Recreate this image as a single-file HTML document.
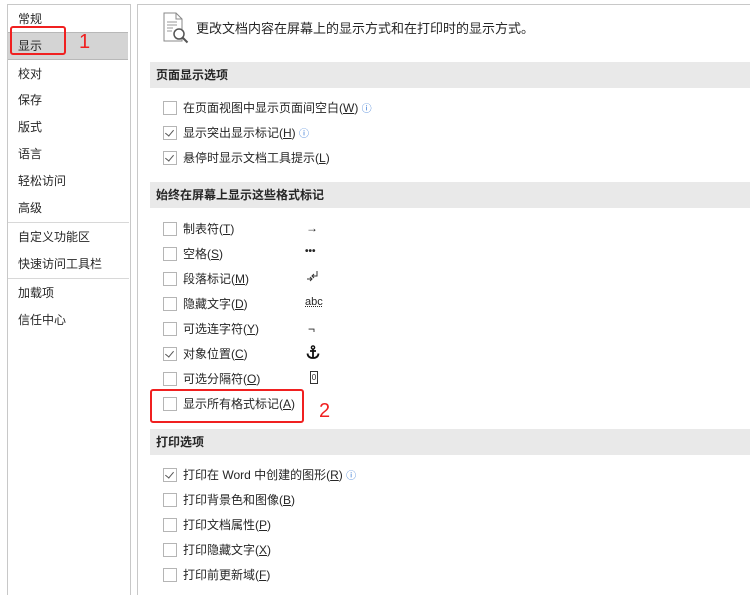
<html><head><style>
body{margin:0;width:750px;height:583px;background:#fff;font-family:"Liberation Sans","Noto Sans CJK SC",sans-serif;font-size:12px;color:#262626;position:relative;overflow:hidden}
.a{position:absolute;white-space:nowrap}
.lp{position:absolute;left:7px;top:4px;width:122px;height:590px;border:1px solid #c8c8c8;border-bottom:none}
.rp{position:absolute;left:137px;top:4px;width:620px;height:590px;border-left:1px solid #c8c8c8;border-top:1px solid #c8c8c8}
.hd{position:absolute;left:150px;width:600px;height:26px;background:#e9e9e9;font-weight:bold;line-height:26px;padding-left:6px;box-sizing:border-box}
.cb{position:absolute;left:163px;width:12px;height:12px;border:1px solid #b5b5b5;background:#fff}
.cb.c:after{content:"";position:absolute;left:3px;top:1px;width:4px;height:7px;border-right:1px solid #555;border-bottom:1px solid #555;transform:rotate(40deg)}
u{text-decoration:underline}
.sep{position:absolute;left:8px;width:121px;height:1px;background:#d8d8d8}
</style></head><body>
<div class="lp"></div>
<div class="a" style="left:8px;top:32px;width:120px;height:26px;background:#d4d4d4;border-top:1px solid #b8b8b8;border-bottom:1px solid #b8b8b8"></div>
<div class="a" style="left:18px;top:10px">常规</div>
<div class="a" style="left:18px;top:37px">显示</div>
<div class="a" style="left:18px;top:65px">校对</div>
<div class="a" style="left:18px;top:91px">保存</div>
<div class="a" style="left:18px;top:118px">版式</div>
<div class="a" style="left:18px;top:145px">语言</div>
<div class="a" style="left:18px;top:172px">轻松访问</div>
<div class="a" style="left:18px;top:199px">高级</div>
<div class="sep" style="top:222px"></div>
<div class="a" style="left:18px;top:228px">自定义功能区</div>
<div class="a" style="left:18px;top:255px">快速访问工具栏</div>
<div class="sep" style="top:278px"></div>
<div class="a" style="left:18px;top:284px">加载项</div>
<div class="a" style="left:18px;top:311px">信任中心</div>
<div class="a" style="left:10px;top:26px;width:52px;height:25px;border:2px solid #f02020;border-radius:3px"></div>
<div class="a" style="left:79px;top:31px;color:#f02020;font-size:20px">1</div>
<div class="rp"></div>
<svg class="a" style="left:162px;top:12px" width="30" height="32" viewBox="0 0 30 32"><path d="M2 1h12l6 6v22H2z" fill="#fff" stroke="#888"/><path d="M14 1v6h6" fill="none" stroke="#888"/><path d="M5 10h10M5 13h10M5 16h6M5 19h5" stroke="#999"/><circle cx="17" cy="22" r="5" fill="#fff" stroke="#555" stroke-width="1.5"/><path d="M20.5 25.5l5 5" stroke="#555" stroke-width="2"/></svg>
<div class="a" style="left:196px;top:18px;font-size:13px">更改文档内容在屏幕上的显示方式和在打印时的显示方式。</div>
<div class="hd" style="top:62px">页面显示选项</div>
<div class="hd" style="top:182px">始终在屏幕上显示这些格式标记</div>
<div class="hd" style="top:429px">打印选项</div>
<div class="cb" style="top:101px"></div><div class="a" style="left:183px;top:99px">在页面视图中显示页面间空白(<u>W</u>) <span style="color:#3a7bd5;font-size:10px">ⓘ</span></div>
<div class="cb c" style="top:126px"></div><div class="a" style="left:183px;top:124px">显示突出显示标记(<u>H</u>) <span style="color:#3a7bd5;font-size:10px">ⓘ</span></div>
<div class="cb c" style="top:151px"></div><div class="a" style="left:183px;top:149px">悬停时显示文档工具提示(<u>L</u>)</div>
<div class="cb" style="top:222px"></div><div class="a" style="left:183px;top:220px">制表符(<u>T</u>)</div><div class="a" style="left:306px;top:221px">→</div>
<div class="cb" style="top:247px"></div><div class="a" style="left:305px;top:246px;font-size:10px;font-weight:bold">•••</div><div class="a" style="left:183px;top:245px">空格(<u>S</u>)</div>
<div class="cb" style="top:272px"></div><div class="a" style="left:183px;top:270px">段落标记(<u>M</u>)</div>
<svg class="a" style="left:306px;top:270px" width="14" height="14" viewBox="0 0 14 14"><path d="M11 1v5H6M8 4L6 6l2 2M1 9h5M4 7l2 2-2 2" fill="none" stroke="#333" stroke-width="1"/></svg>
<div class="cb" style="top:297px"></div><div class="a" style="left:183px;top:295px">隐藏文字(<u>D</u>)</div><div class="a" style="left:305px;top:296px;font-size:11px;text-decoration:underline dotted">abc</div>
<div class="cb" style="top:322px"></div><div class="a" style="left:183px;top:320px">可选连字符(<u>Y</u>)</div><div class="a" style="left:308px;top:322px">¬</div>
<div class="cb c" style="top:347px"></div><div class="a" style="left:183px;top:345px">对象位置(<u>C</u>)</div>
<svg class="a" style="left:306px;top:345px" width="14" height="14" viewBox="0 0 14 14"><circle cx="7" cy="2.5" r="1.6" fill="none" stroke="#111" stroke-width="1.4"/><path d="M7 4v9M4 6h6M1.5 8.5Q2 13 7 13Q12 13 12.5 8.5" fill="none" stroke="#111" stroke-width="1.8"/></svg>
<div class="cb" style="top:372px"></div><div class="a" style="left:183px;top:370px">可选分隔符(<u>O</u>)</div><div class="a" style="left:310px;top:371px;width:6px;height:11px;border:1px solid #333;font-size:8px;line-height:11px;text-align:center">0</div>
<div class="cb" style="top:397px"></div><div class="a" style="left:183px;top:395px">显示所有格式标记(<u>A</u>)</div>
<div class="a" style="left:150px;top:389px;width:150px;height:30px;border:2px solid #f02020;border-radius:3px"></div>
<div class="a" style="left:319px;top:400px;color:#f02020;font-size:20px">2</div>
<div class="cb c" style="top:468px"></div><div class="a" style="left:183px;top:466px">打印在 Word 中创建的图形(<u>R</u>) <span style="color:#3a7bd5;font-size:10px">ⓘ</span></div>
<div class="cb" style="top:493px"></div><div class="a" style="left:183px;top:491px">打印背景色和图像(<u>B</u>)</div>
<div class="cb" style="top:518px"></div><div class="a" style="left:183px;top:516px">打印文档属性(<u>P</u>)</div>
<div class="cb" style="top:543px"></div><div class="a" style="left:183px;top:541px">打印隐藏文字(<u>X</u>)</div>
<div class="cb" style="top:568px"></div><div class="a" style="left:183px;top:566px">打印前更新域(<u>F</u>)</div>
</body></html>
